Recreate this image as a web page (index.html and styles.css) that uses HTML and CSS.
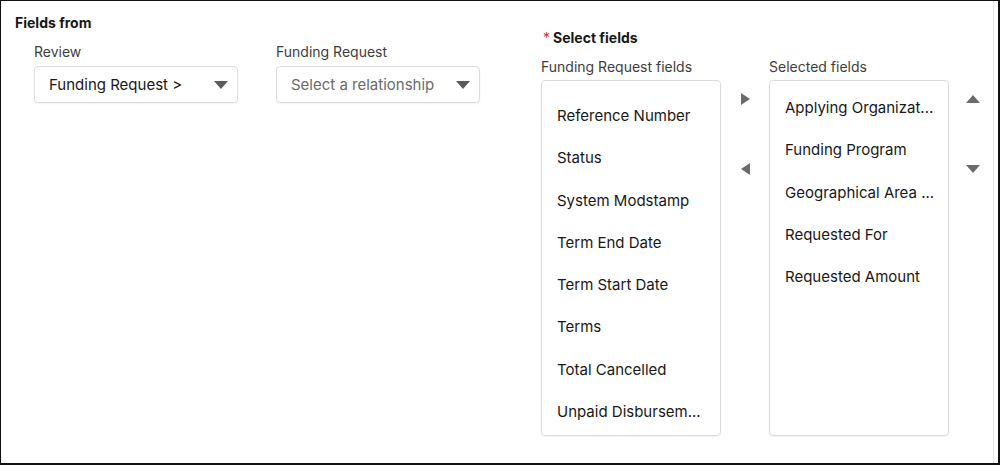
FILE: index.html
```html
<!DOCTYPE html>
<html lang="en">
<head>
<meta charset="utf-8">
<title>Fields from</title>
<link rel="stylesheet" href="styles.css">
</head>
<body>
<div class="frame">
  <section class="source">
    <h2 class="title">Fields from</h2>
    <div class="combos">
      <div class="field">
        <label class="label">Review</label>
        <div class="select">
          <span class="value">Funding Request &gt;</span>
          <svg class="caret" viewBox="0 0 14 8" width="14" height="8"><path d="M0 0H14L7 8Z"/></svg>
        </div>
      </div>
      <div class="field">
        <label class="label">Funding Request</label>
        <div class="select">
          <span class="value placeholder">Select a relationship</span>
          <svg class="caret" viewBox="0 0 14 8" width="14" height="8"><path d="M0 0H14L7 8Z"/></svg>
        </div>
      </div>
    </div>
  </section>
  <section class="picker">
    <h2 class="title"><span class="star">*</span>Select fields</h2>
    <div class="dual">
      <div class="label">Funding Request fields</div>
      <div></div>
      <div class="label">Selected fields</div>
      <div></div>
      <ul class="list list-source">
        <li>Reference Number</li>
        <li>Status</li>
        <li>System Modstamp</li>
        <li>Term End Date</li>
        <li>Term Start Date</li>
        <li>Terms</li>
        <li>Total Cancelled</li>
        <li>Unpaid Disbursem...</li>
      </ul>
      <div class="moves">
        <svg viewBox="0 0 14 12" width="14" height="12"><path d="M3 0L12 6L3 12Z"/></svg>
        <svg viewBox="0 0 14 12" width="14" height="12"><path d="M12 0L3 6L12 12Z"/></svg>
      </div>
      <ul class="list list-selected">
        <li>Applying Organizat...</li>
        <li>Funding Program</li>
        <li>Geographical Area ...</li>
        <li>Requested For</li>
        <li>Requested Amount</li>
      </ul>
      <div class="moves">
        <svg viewBox="0 0 14 12" width="14" height="12"><path d="M7 2L14 10H0Z"/></svg>
        <svg viewBox="0 0 14 12" width="14" height="12"><path d="M0 2H14L7 10Z"/></svg>
      </div>
    </div>
  </section>
</div>
</body>
</html>
```

FILE: styles.css
```css
* { box-sizing: border-box; }
html, body { margin: 0; padding: 0; background: #fff; }
body {
  font-family: Inter, "Open Sans", "Liberation Sans", sans-serif;
  color: #181818;
}
.frame {
  width: 1000px;
  height: 465px;
  border: 1px solid #111;
  border-right-width: 2px;
  border-bottom-width: 2px;
  box-shadow: inset -4px 0 0 #fff, inset -5px 0 0 #e6e6e6;
  display: flex;
  padding: 14px 0 0 14px;
  overflow: hidden;
}
.title {
  margin: 0;
  font-size: 14px;
  line-height: 16px;
  font-weight: 700;
  color: #181818;
}
.star { color: #c23934; margin: 0 3px 0 2px; font-weight: 400; }
.source { width: 526px; flex: none; }
.combos {
  display: flex;
  gap: 38px;
  padding-left: 19px;
  margin-top: 13px;
}
.field { display: flex; flex-direction: column; gap: 6px; width: 204px; }
.label {
  font-size: 14px;
  line-height: 16px;
  color: #3e3e3c;
}
.select {
  height: 37px;
  border: 1px solid #dcdcdc;
  border-radius: 4px;
  box-shadow: 0 1px 2px rgba(0,0,0,0.06);
  display: flex;
  align-items: center;
  justify-content: space-between;
  padding: 0 9px 0 14px;
  font-size: 15px;
}
.placeholder { color: #6b6b6b; }
.caret { fill: #5c5c5c; }
.picker { margin-top: 15px; }
.dual {
  display: grid;
  grid-template-columns: 180px 48px 180px 48px;
  row-gap: 5px;
  margin-top: 13px;
}
.list {
  list-style: none;
  margin: 0;
  height: 356px;
  border: 1px solid #dcdcdc;
  border-radius: 4px;
  box-shadow: 0 1px 2px rgba(0,0,0,0.06);
  padding: 14px 10px 0 15px;
  font-size: 15px;
  overflow: hidden;
}
.list li {
  height: 42.3px;
  line-height: 42.3px;
  white-space: nowrap;
}
.list-selected { padding-top: 6px; }
.moves {
  display: flex;
  flex-direction: column;
  align-items: center;
  gap: 58px;
  padding-top: 13px;
}
.moves svg { fill: #6b6b6b; }
```
